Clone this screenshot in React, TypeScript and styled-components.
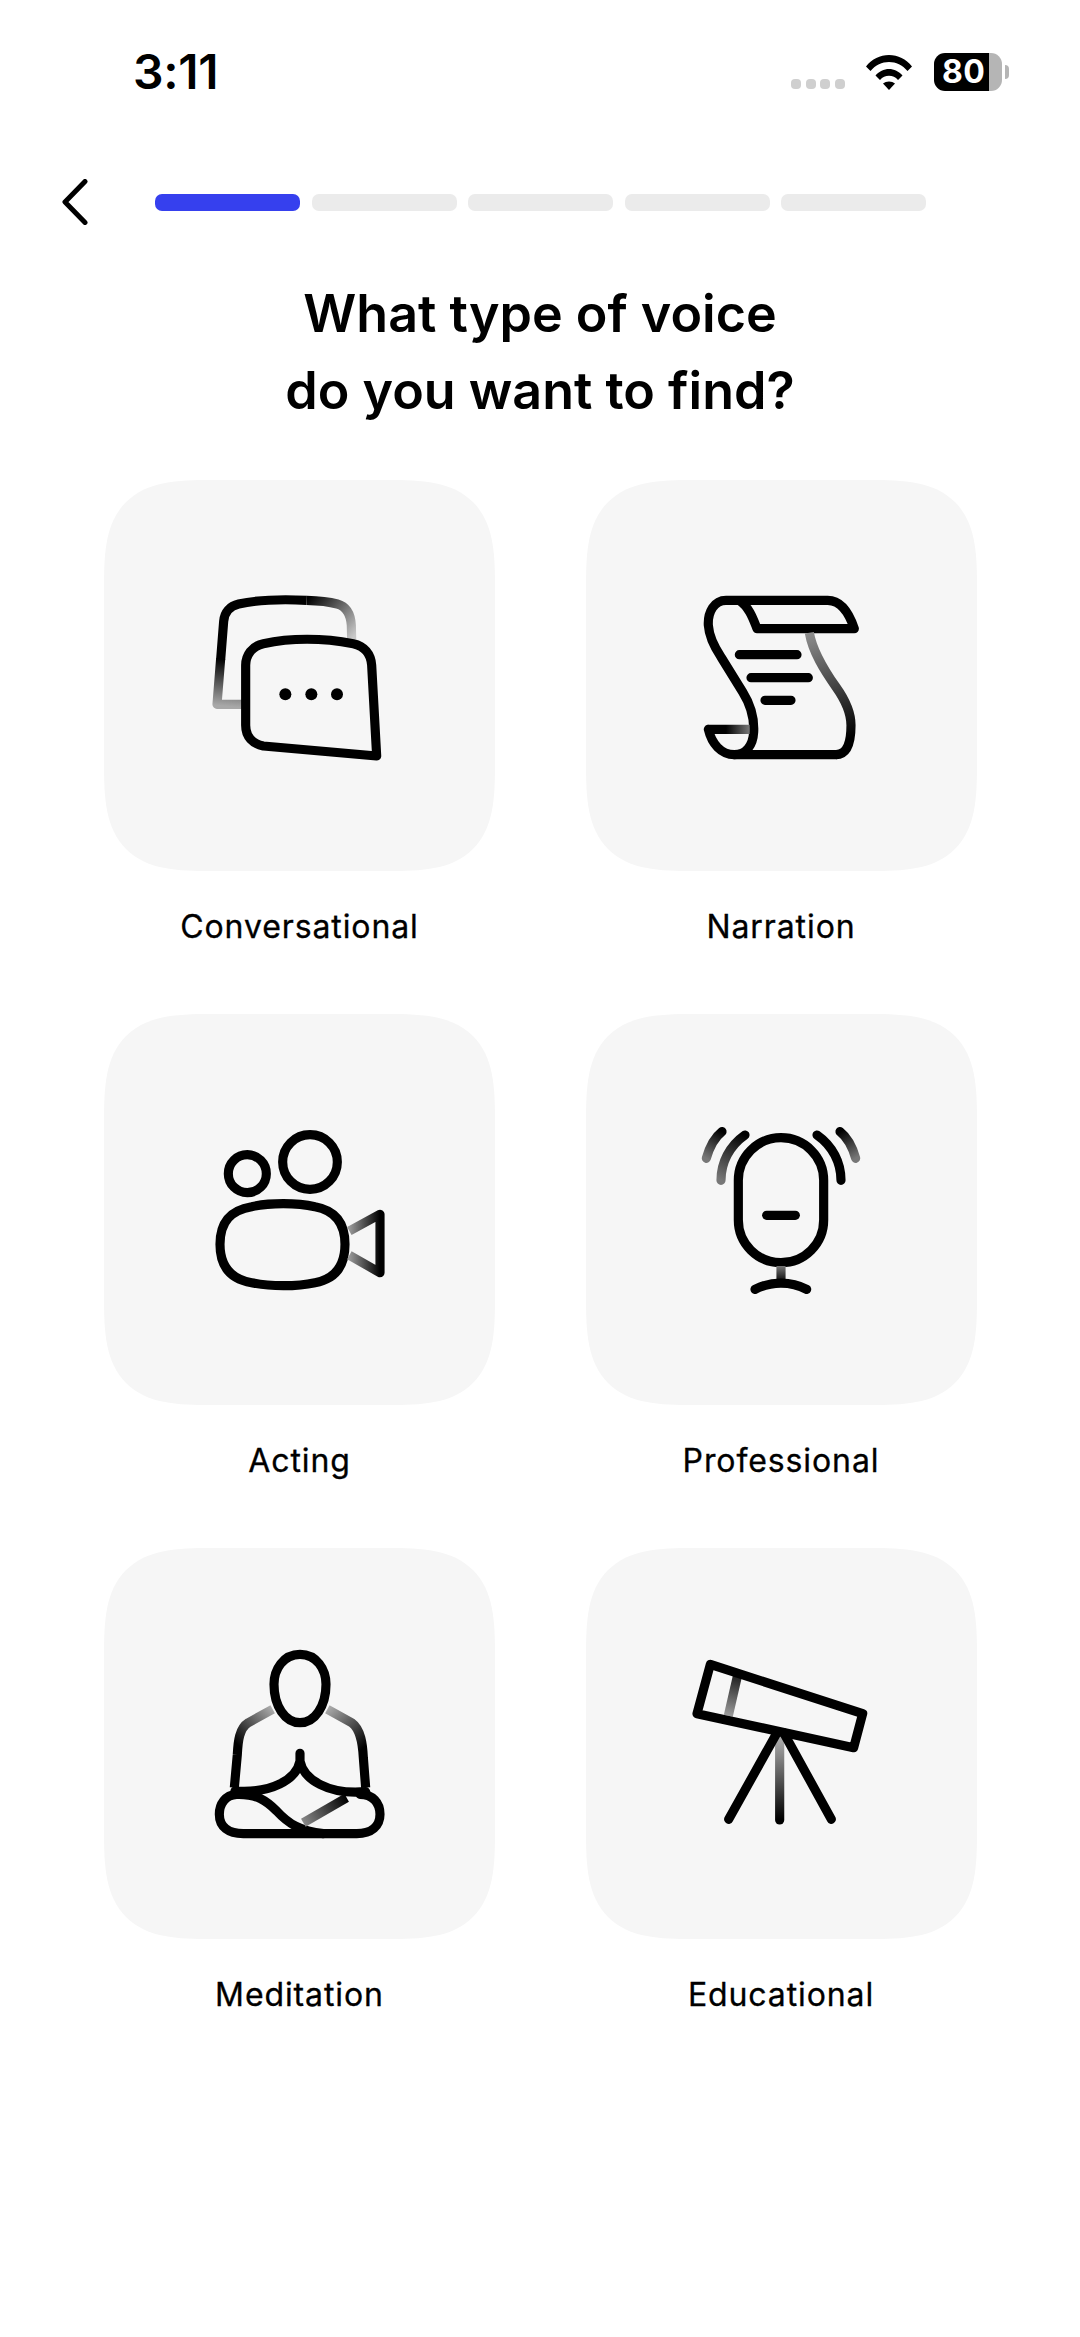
import React from "react";
import styled, { createGlobalStyle } from "styled-components";

const Global = createGlobalStyle`
  html, body { margin: 0; padding: 0; background: #fff; }
  body { font-family: Inter, "Liberation Sans", sans-serif; color: #000; }
`;

const Page = styled.div`
  width: 1080px;
  height: 2337px;
  background: #fff;
  overflow: hidden;
  display: flex;
  flex-direction: column;
`;

const StatusBar = styled.div`
  height: 105px;
  padding: 53px 78px 0 133px;
  box-sizing: border-box;
  display: flex;
  justify-content: space-between;
  align-items: flex-start;
`;

const Clock = styled.div`
  font-size: 48px;
  line-height: 38px;
  font-weight: 600;
  letter-spacing: -0.3px;
`;

const StatusIcons = styled.div`
  display: flex;
  align-items: flex-start;
`;

const Signal = styled.div`
  display: flex;
  gap: 4.6px;
  margin: 26px 21px 0 0;
`;

const SignalDot = styled.span`
  width: 10px;
  height: 10px;
  border-radius: 4px;
  background: #cfcfcf;
`;

const Wifi = styled.svg`
  width: 46px;
  height: 36px;
  margin: 1px 22px 0 0;
`;

const Battery = styled.div`
  position: relative;
  width: 68px;
  height: 38px;
  border-radius: 11px;
  background: linear-gradient(90deg, #000 55px, #b5b5b5 55px);
  color: #fff;
  font-size: 32px;
  font-weight: 700;
  line-height: 38px;
  padding-left: 8px;
  box-sizing: border-box;
  letter-spacing: 0.5px;
  &::after {
    content: "";
    position: absolute;
    left: 71px;
    top: 12px;
    width: 4px;
    height: 14px;
    background: #b5b5b5;
    border-radius: 0 7px 7px 0;
  }
`;

const NavRow = styled.div`
  height: 80px;
  padding-left: 62px;
  display: flex;
  align-items: center;
  margin-top: 57px;
  box-sizing: border-box;
`;

const BackIcon = styled.svg`
  width: 26px;
  height: 46px;
  margin-right: 67px;
`;

const Progress = styled.div`
  display: flex;
  gap: 11.5px;
`;

const Step = styled.div<{ $active?: boolean }>`
  width: 145px;
  height: 17px;
  border-radius: 7px;
  background: ${(p) => (p.$active ? "#3640ee" : "#ebebeb")};
`;

const Title = styled.h1`
  margin: 33px 0 0;
  font-size: 52px;
  line-height: 77px;
  font-weight: 600;
  text-align: center;
  letter-spacing: 0;
`;

const Grid = styled.div`
  margin-top: 51px;
  padding-left: 104px;
  display: grid;
  grid-template-columns: 391px 391px;
  grid-auto-rows: 534px;
  column-gap: 90.500px;
`;

const Item = styled.div`
  display: flex;
  flex-direction: column;
  align-items: center;
`;

const Card = styled.div`
  width: 391px;
  height: 391px;
  background: #f6f6f6;
  border-radius: 108px;
  corner-shape: superellipse(1.6);
`;

const Label = styled.div`
  margin-top: 36px;
  font-size: 32px;
  line-height: 40px;
  font-weight: 400;
  letter-spacing: 0.9px;
  -webkit-text-stroke: 0.3px #000;
`;

const IconSvg = styled.svg`
  display: block;
  width: 391px;
  height: 391px;
  fill: none;
  stroke: #000;
  stroke-width: 27.500;
  stroke-linecap: round;
  stroke-linejoin: round;
`;

type GradProps = { id: string; x1: number; y1: number; x2: number; y2: number; from: string; to: string };
const Grad = ({ id, x1, y1, x2, y2, from, to }: GradProps) => (
  <linearGradient id={id} gradientUnits="userSpaceOnUse" x1={x1} y1={y1} x2={x2} y2={y2}>
    <stop offset="0" stopColor={from} />
    <stop offset="1" stopColor={to} />
  </linearGradient>
);

const Icon = ({ x, y, children }: { x: number; y: number; children: React.ReactNode }) => (
  <IconSvg viewBox={`${x} ${y} 1173 1173`}>{children}</IconSvg>
);

const ChatIcon = () => (
  <Icon x={-228} y={-246}>
    <defs>
      <Grad id="c1" x1={112} y1={430} x2={125} y2={290} from="#a8a8a8" to="#000" />
      <Grad id="c2" x1={380} y1={115} x2={515} y2={230} from="#000" to="#c8c8c8" />
    </defs>
    <path stroke="url(#c1)" strokeLinecap="butt" d="M188 427H111L122 290" />
    <path strokeLinecap="butt" d="M122 292L131 178C133 150 150 132 176 126C240 112 320 112 380 115" />
    <path stroke="url(#c2)" strokeLinecap="butt" d="M380 115C420 116 450 120 472 126C497 133 512 155 514 190L515 232" />
    <path d="M590 582L575 310C573 275 552 252 520 245C430 228 330 228 250 245C216 252 197 280 197 310V490C197 525 218 545 250 552Z" />
    <circle cx="316" cy="397" r="18" fill="#000" stroke="none" />
    <circle cx="394" cy="397" r="18" fill="#000" stroke="none" />
    <circle cx="471" cy="397" r="18" fill="#000" stroke="none" />
  </Icon>
);

const ScrollIcon = () => (
  <Icon x={-255} y={-276}>
    <defs>
      <Grad id="s1" x1={415} y1={185} x2={535} y2={500} from="#8c8c8c" to="#000" />
      <Grad id="s2" x1={165} y1={472} x2={235} y2={472} from="#000" to="#777" />
    </defs>
    <path d="M205 85C235 105 248 145 258 170H550C535 125 510 85 470 85H165C130 85 110 120 112 160C114 190 130 225 150 255L215 360C240 400 250 440 248 480C246 520 225 548 190 548C150 548 122 515 112 472" />
    <path stroke="url(#s2)" strokeLinecap="butt" d="M112 472H236" />
    <path d="M190 548H495" />
    <path stroke="url(#s1)" strokeLinecap="butt" d="M415 182C425 240 460 295 495 345C520 380 540 420 540 460C540 510 528 548 495 548" />
    <path d="M205 248H378M240 317H412M282 385H360" />
  </Icon>
);

const CameraIcon = () => (
  <Icon x={-258} y={-291}>
    <defs>
      <Grad id="v1" x1={478} y1={400} x2={570} y2={400} from="#999" to="#000" />
    </defs>
    <circle cx="360" cy="153" r="82" />
    <circle cx="172" cy="188" r="57" />
    <path d="M185 287C240 275 320 275 375 287C430 297 465 330 465 400C465 470 430 505 375 515C320 527 240 527 185 515C125 505 90 470 90 400C90 330 125 297 185 287Z" />
    <path stroke="url(#v1)" strokeLinecap="butt" d="M478 360L570 310V485L478 433" />
  </Icon>
);

const MicIcon = () => (
  <Icon x={-285} y={-291}>
    <defs>
      <Grad id="m1" x1={300} y1={465} x2={300} y2={515} from="#777" to="#000" />
      <Grad id="m2" x1={192} y1={72} x2={120} y2={208} from="#000" to="#777" />
      <Grad id="m3" x1={123} y1={62} x2={76} y2={142} from="#000" to="#777" />
      <Grad id="m4" x1={477} y1={62} x2={524} y2={142} from="#000" to="#777" />
    </defs>
    <rect x="172" y="80" width="256" height="375" rx="128" />
    <path d="M257 313H343" />
    <path stroke="url(#m1)" strokeLinecap="butt" d="M300 465V515" />
    <path d="M222 535C270 510 330 510 377 535" />
    <path stroke="url(#m2)" d="M192 72C145 105 120 155 120 208" />
    <path stroke="url(#m3)" d="M123 62C100 80 85 110 76 142" />
    <path d="M408 72C455 105 480 155 480 208" />
    <path stroke="url(#m4)" d="M477 62C500 80 515 110 524 142" />
  </Icon>
);

const MeditateIcon = () => (
  <Icon x={-288} y={-279}>
    <defs>
      <Grad id="d1" x1={218} y1={205} x2={112} y2={310} from="#aaa" to="#000" />
      <Grad id="d2" x1={382} y1={205} x2={490} y2={320} from="#aaa" to="#000" />
      <Grad id="d3" x1={310} y1={545} x2={440} y2={470} from="#888" to="#000" />
    </defs>
    <path d="M300 40C350 40 378 85 378 130C378 195 345 245 300 245C255 245 222 195 222 130C222 85 250 40 300 40Z" />
    <path stroke="url(#d1)" strokeLinecap="butt" d="M218 205L145 245C118 262 114 300 112 340L103 440" />
    <path stroke="url(#d2)" strokeLinecap="butt" d="M382 205L455 245C483 265 488 310 490 350L497 440" />
    <path d="M300 337V360C290 415 215 458 105 450M300 360C310 415 385 462 497 452" />
    <path d="M110 460C75 462 58 490 58 520C58 558 85 578 130 578H470C515 578 540 555 540 520C540 485 518 460 480 460" />
    <path d="M110 460C170 458 200 480 230 510C265 548 300 570 370 578" />
    <path stroke="url(#d3)" strokeLinecap="butt" d="M310 545L440 470" />
  </Icon>
);

const TelescopeIcon = () => (
  <Icon x={-285} y={-279}>
    <defs>
      <Grad id="t1" x1={170} y1={108} x2={143} y2={222} from="#222" to="#999" />
      <Grad id="t2" x1={296} y1={295} x2={296} y2={535} from="#aaa" to="#000" />
    </defs>
    <path stroke="url(#t1)" strokeLinecap="butt" d="M170 102L142 224" />
    <path stroke="url(#t2)" d="M296 290V537" />
    <path d="M88 70L545 218L518 320L48 218Z" />
    <path d="M288 275L143 535M308 275L451 535" />
  </Icon>
);

const items = [
  { label: "Conversational", icon: <ChatIcon /> },
  { label: "Narration", icon: <ScrollIcon /> },
  { label: "Acting", icon: <CameraIcon /> },
  { label: "Professional", icon: <MicIcon /> },
  { label: "Meditation", icon: <MeditateIcon /> },
  { label: "Educational", icon: <TelescopeIcon /> },
];

export default function App() {
  return (
    <Page>
      <Global />
      <StatusBar>
        <Clock>3:11</Clock>
        <StatusIcons>
          <Signal>
            <SignalDot />
            <SignalDot />
            <SignalDot />
            <SignalDot />
          </Signal>
          <Wifi viewBox="0 0 46 36">
            <path d="M0 12.500C6 5 14 1 23 1s17 4 23 11.500l-4.500 4.500C36.500 11 30 8 23 8S9.500 11 4.500 17Z" fill="#000" />
            <path d="M9.500 21.500C13 17.500 18 15 23 15s10 2.500 13.500 6.500L32 26c-2.500-2.800-5.500-4.200-9-4.200s-6.500 1.400-9 4.200Z" fill="#000" />
            <path d="M17 29.500c1.700-1.300 3.700-2 6-2s4.300.7 6 2L23 36Z" fill="#000" />
          </Wifi>
          <Battery>80</Battery>
        </StatusIcons>
      </StatusBar>
      <NavRow>
        <BackIcon viewBox="0 0 26 46">
          <path d="M23 2.500L3 23L23 43.500" fill="none" stroke="#000" strokeWidth="5" strokeLinecap="round" strokeLinejoin="round" />
        </BackIcon>
        <Progress>
          <Step $active />
          <Step />
          <Step />
          <Step />
          <Step />
        </Progress>
      </NavRow>
      <Title>
        What type of voice
        <br />
        do you want to find?
      </Title>
      <Grid>
        {items.map((it) => (
          <Item key={it.label}>
            <Card>{it.icon}</Card>
            <Label>{it.label}</Label>
          </Item>
        ))}
      </Grid>
    </Page>
  );
}
